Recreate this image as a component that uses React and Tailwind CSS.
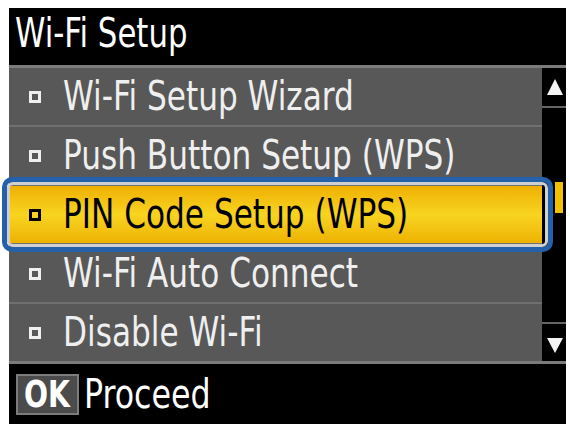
import React from 'react';

const items = [
  'Wi-Fi Setup Wizard',
  'Push Button Setup (WPS)',
  'PIN Code Setup (WPS)',
  'Wi-Fi Auto Connect',
  'Disable Wi-Fi',
];
const selected = 2;

const lcdFont = "font-['DejaVu_Sans_Condensed','DejaVu_Sans',sans-serif] font-stretch-condensed";

const MenuRow = ({ label, active }) => (
  <div
    className={
      active
        ? 'h-[57px] flex items-center bg-gradient-to-b from-[#efb000] via-[#f7d41f] to-[#eeb200] text-black'
        : 'h-[57px] flex items-center bg-[#585858] text-[#efefef]'
    }
  >
    <span className="ml-[20px] w-[12px] h-[12px] border-[3px] border-current shrink-0" />
    <span className="ml-[22px] inline-block origin-left scale-x-[0.845] whitespace-nowrap text-[41px] leading-none">
      {label}
    </span>
  </div>
);

const Arrow = ({ down }) => (
  <svg width="18" height="18" viewBox="0 0 18 18" className="mx-auto block">
    {down ? (
      <polygon points="1,2 17,2 9,17" fill="#f4f4f4" />
    ) : (
      <polygon points="9,1 17,17 1,17" fill="#f4f4f4" />
    )}
  </svg>
);

export default function App() {
  return (
    <div className="w-[570px] h-[429px] bg-white pt-[8px] pl-[9px] overflow-hidden">
      <div className={`relative w-[557px] h-[416px] bg-black flex flex-col ${lcdFont}`}>
        {/* title */}
        <div className="h-[57px] pt-[5px] pl-[6px] text-white">
          <span className="inline-block origin-left scale-x-[0.855] whitespace-nowrap text-[40px] leading-none">
            Wi-Fi Setup
          </span>
        </div>
        <div className="h-[3px] bg-[#7b7b7b]" />

        {/* menu list + scrollbar */}
        <div className="flex h-[293px]">
          <div className="flex-1 flex flex-col gap-[2px] bg-[#707070]">
            {items.map((label, i) => (
              <MenuRow key={label} label={label} active={i === selected} />
            ))}
          </div>
          <div className="w-[24px] bg-black flex flex-col">
            <div className="pt-[10px] pl-[2px]">
              <Arrow />
            </div>
            <div className="mt-[10px] h-[2px] bg-[#666]" />
            <div className="mt-[74px] ml-[13px] w-[8px] h-[31px] bg-[#f1c000]" />
            <div className="mt-[109px] h-[2px] bg-[#666]" />
            <div className="mt-[12px] pl-[2px]">
              <Arrow down />
            </div>
          </div>
        </div>
        <div className="h-[3px] bg-[#7b7b7b]" />

        {/* footer */}
        <div className="flex-1 flex items-center pl-[7px] text-white">
          <div className="w-[63px] h-[41px] bg-[#4b4b4b] border-2 border-[#7c7c7c] flex items-center justify-center overflow-hidden">
            <span className="inline-block scale-x-[0.85] font-bold text-[37px] leading-none">OK</span>
          </div>
          <span className="ml-[5px] inline-block origin-left scale-x-[0.88] whitespace-nowrap text-[40px] leading-none">
            Proceed
          </span>
        </div>

        {/* focus ring over the selected row */}
        <div className="absolute left-[-7px] top-[169px] w-[551px] h-[75px] rounded-[10px] border-[5px] border-[#2561ab]">
          <div className="absolute inset-0 rounded-[6px] border-[3px] border-[#cfcfcf]" />
        </div>
      </div>
    </div>
  );
}
